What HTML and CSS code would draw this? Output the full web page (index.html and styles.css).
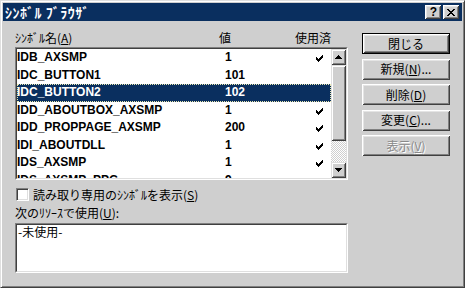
FILE: index.html
```html
<!DOCTYPE html>
<html lang="ja">
<head>
<meta charset="utf-8">
<title>シンボル ブラウザ</title>
<link rel="stylesheet" href="styles.css">
</head>
<body>
<div class="window">
  <div class="titlebar">
    <span class="title">ｼﾝﾎﾞﾙ ﾌﾞﾗｳｻﾞ</span>
    <div class="tbtns">
      <span class="tbtn help">?</span>
      <span class="tbtn close">
        <svg width="8" height="7" viewBox="0 0 8 7" shape-rendering="crispEdges">
          <rect x="0" y="0" width="2" height="1"/><rect x="6" y="0" width="2" height="1"/>
          <rect x="1" y="1" width="2" height="1"/><rect x="5" y="1" width="2" height="1"/>
          <rect x="2" y="2" width="4" height="1"/>
          <rect x="3" y="3" width="2" height="1"/>
          <rect x="2" y="4" width="4" height="1"/>
          <rect x="1" y="5" width="2" height="1"/><rect x="5" y="5" width="2" height="1"/>
          <rect x="0" y="6" width="2" height="1"/><rect x="6" y="6" width="2" height="1"/>
        </svg>
      </span>
    </div>
  </div>
  <div class="content">
    <div class="left">
      <div class="headers">
        <span>ｼﾝﾎﾞﾙ名(<u>A</u>)</span>
        <span>値</span>
        <span>使用済</span>
      </div>
      <div class="listbox">
        <div class="listbox-inner">
          <div class="rows">
            <div class="row"><span class="c-name">IDB_AXSMP</span><span class="c-val">1</span><span class="c-used"><svg class="check" width="7" height="7" viewBox="0 0 7 7" shape-rendering="crispEdges"><rect x="6" y="0" width="1" height="1"/><rect x="5" y="1" width="2" height="1"/><rect x="0" y="2" width="1" height="1"/><rect x="4" y="2" width="3" height="1"/><rect x="0" y="3" width="2" height="1"/><rect x="3" y="3" width="3" height="1"/><rect x="0" y="4" width="5" height="1"/><rect x="1" y="5" width="3" height="1"/><rect x="2" y="6" width="1" height="1"/></svg></span></div>
            <div class="row"><span class="c-name">IDC_BUTTON1</span><span class="c-val">101</span><span class="c-used"></span></div>
            <div class="row selected"><span class="c-name">IDC_BUTTON2</span><span class="c-val">102</span><span class="c-used"></span></div>
            <div class="row"><span class="c-name">IDD_ABOUTBOX_AXSMP</span><span class="c-val">1</span><span class="c-used"><svg class="check" width="7" height="7" viewBox="0 0 7 7" shape-rendering="crispEdges"><rect x="6" y="0" width="1" height="1"/><rect x="5" y="1" width="2" height="1"/><rect x="0" y="2" width="1" height="1"/><rect x="4" y="2" width="3" height="1"/><rect x="0" y="3" width="2" height="1"/><rect x="3" y="3" width="3" height="1"/><rect x="0" y="4" width="5" height="1"/><rect x="1" y="5" width="3" height="1"/><rect x="2" y="6" width="1" height="1"/></svg></span></div>
            <div class="row"><span class="c-name">IDD_PROPPAGE_AXSMP</span><span class="c-val">200</span><span class="c-used"><svg class="check" width="7" height="7" viewBox="0 0 7 7" shape-rendering="crispEdges"><rect x="6" y="0" width="1" height="1"/><rect x="5" y="1" width="2" height="1"/><rect x="0" y="2" width="1" height="1"/><rect x="4" y="2" width="3" height="1"/><rect x="0" y="3" width="2" height="1"/><rect x="3" y="3" width="3" height="1"/><rect x="0" y="4" width="5" height="1"/><rect x="1" y="5" width="3" height="1"/><rect x="2" y="6" width="1" height="1"/></svg></span></div>
            <div class="row"><span class="c-name">IDI_ABOUTDLL</span><span class="c-val">1</span><span class="c-used"><svg class="check" width="7" height="7" viewBox="0 0 7 7" shape-rendering="crispEdges"><rect x="6" y="0" width="1" height="1"/><rect x="5" y="1" width="2" height="1"/><rect x="0" y="2" width="1" height="1"/><rect x="4" y="2" width="3" height="1"/><rect x="0" y="3" width="2" height="1"/><rect x="3" y="3" width="3" height="1"/><rect x="0" y="4" width="5" height="1"/><rect x="1" y="5" width="3" height="1"/><rect x="2" y="6" width="1" height="1"/></svg></span></div>
            <div class="row"><span class="c-name">IDS_AXSMP</span><span class="c-val">1</span><span class="c-used"><svg class="check" width="7" height="7" viewBox="0 0 7 7" shape-rendering="crispEdges"><rect x="6" y="0" width="1" height="1"/><rect x="5" y="1" width="2" height="1"/><rect x="0" y="2" width="1" height="1"/><rect x="4" y="2" width="3" height="1"/><rect x="0" y="3" width="2" height="1"/><rect x="3" y="3" width="3" height="1"/><rect x="0" y="4" width="5" height="1"/><rect x="1" y="5" width="3" height="1"/><rect x="2" y="6" width="1" height="1"/></svg></span></div>
            <div class="row"><span class="c-name">IDS_AXSMP_PPG</span><span class="c-val">9</span><span class="c-used"></span></div>
          </div>
          <div class="vscroll">
            <div class="sb-btn">
              <svg width="7" height="4" viewBox="0 0 7 4" shape-rendering="crispEdges"><rect x="3" y="0" width="1" height="1"/><rect x="2" y="1" width="3" height="1"/><rect x="1" y="2" width="5" height="1"/><rect x="0" y="3" width="7" height="1"/></svg>
            </div>
            <div class="sb-thumb"></div>
            <div class="sb-track"></div>
            <div class="sb-btn">
              <svg width="7" height="4" viewBox="0 0 7 4" shape-rendering="crispEdges"><rect x="0" y="0" width="7" height="1"/><rect x="1" y="1" width="5" height="1"/><rect x="2" y="2" width="3" height="1"/><rect x="3" y="3" width="1" height="1"/></svg>
            </div>
          </div>
        </div>
      </div>
      <div class="chk"><span class="box"></span><span>読み取り専用のｼﾝﾎﾞﾙを表示(<u>S</u>)</span></div>
      <div class="lbl2">次のﾘｿｰｽで使用(<u>U</u>):</div>
      <div class="usage"><div class="usage-inner">-未使用-</div></div>
    </div>
    <div class="buttons">
      <div class="btn default"><span class="btn-face">閉じる</span></div>
      <div class="btn"><span class="btn-face">新規(<u>N</u>)...</span></div>
      <div class="btn"><span class="btn-face">削除(<u>D</u>)</span></div>
      <div class="btn"><span class="btn-face">変更(<u>C</u>)...</span></div>
      <div class="btn disabled"><span class="btn-face">表示(<u>V</u>)</span></div>
    </div>
  </div>
</div>
</body>
</html>
```
FILE: styles.css
```css
* { box-sizing: border-box; }
html, body { margin: 0; padding: 0; }
body {
  width: 465px;
  height: 288px;
  overflow: hidden;
  background: #cfcfcf;
  font-family: "Noto Sans CJK JP", "Liberation Sans", sans-serif;
  font-size: 12px;
  color: #000;
}
u { text-decoration: underline; text-underline-offset: 1px; }

.window {
  width: 465px;
  height: 288px;
  background: #cfcfcf;
  border: 1px solid;
  border-color: #dfdfdf #404040 #404040 #dfdfdf;
  padding: 2px;
  box-shadow: inset 1px 1px #ffffff, inset -1px -1px #808080;
  display: flex;
  flex-direction: column;
}

.titlebar {
  height: 18px;
  flex: none;
  background: #0a2f5f;
  color: #fff;
  display: flex;
  align-items: center;
  justify-content: space-between;
  padding: 0 3px 0 2px;
}
.title {
  font-weight: bold;
  font-size: 14px;
  line-height: 18px;
  letter-spacing: 0.5px;
}
.tbtns { display: flex; gap: 2px; }
.tbtn {
  width: 16px;
  height: 14px;
  background: #cfcfcf;
  color: #000;
  display: flex;
  align-items: center;
  justify-content: center;
  box-shadow: inset 1px 1px #ffffff, inset -1px -1px #404040, inset 2px 2px #e4e4e4, inset -2px -2px #808080;
}
.tbtn.help {
  font-family: "Liberation Sans", sans-serif;
  font-weight: bold;
  font-size: 12px;
  line-height: 14px;
  padding-left: 1px;
}
.tbtn svg { fill: #000; }

.content {
  flex: 1;
  display: flex;
  gap: 14px;
  padding: 9px 0 0 12px;
}
.left {
  width: 333px;
  display: flex;
  flex-direction: column;
}
.headers {
  height: 16px;
  line-height: 16px;
  display: grid;
  grid-template-columns: 204px 76px auto;
}

.listbox {
  margin-top: 1px;
  height: 133px;
  border: 1px solid;
  border-color: #808080 #ffffff #ffffff #808080;
}
.listbox-inner {
  height: 131px;
  border: 1px solid;
  border-color: #404040 #dfdfdf #dfdfdf #404040;
  display: flex;
  background: #fff;
  overflow: hidden;
}
.rows {
  flex: 1;
  overflow: hidden;
}
.row {
  height: 17.5px;
  line-height: 17.5px;
  display: grid;
  grid-template-columns: 208px 88px 1fr;
  font-family: "Liberation Sans", sans-serif;
  font-weight: bold;
  font-size: 12px;
  white-space: nowrap;
}
.row.selected {
  background: #0a2f5f;
  color: #fff;
  outline: 1px dotted #e8e8b0;
  outline-offset: -1px;
}
.c-used {
  padding-left: 3px;
  display: flex;
  align-items: center;
}
.check { fill: #000; margin-top: 2px; }

.vscroll {
  width: 15px;
  display: flex;
  flex-direction: column;
}
.sb-btn, .sb-thumb {
  background: #cfcfcf;
  box-shadow: inset 1px 1px #dfdfdf, inset -1px -1px #404040, inset 2px 2px #ffffff, inset -2px -2px #808080;
}
.sb-btn {
  height: 16px;
  display: flex;
  align-items: center;
  justify-content: center;
}
.sb-btn svg { fill: #000; }
.sb-thumb { height: 76px; }
.sb-track {
  flex: 1;
  background: repeating-conic-gradient(#ffffff 0 25%, #cfcfcf 0 50%) 0 0 / 2px 2px;
}

.chk {
  margin-top: 8px;
  height: 13px;
  line-height: 13px;
  display: flex;
  align-items: center;
  gap: 4px;
  padding-left: 1px;
}
.box {
  width: 13px;
  height: 13px;
  background: #fff;
  border: 1px solid;
  border-color: #808080 #ffffff #ffffff #808080;
  box-shadow: inset 1px 1px #404040, inset -1px -1px #dfdfdf;
}
.lbl2 {
  margin-top: 5px;
  height: 14px;
  line-height: 14px;
}
.usage {
  margin-top: 3px;
  height: 50px;
  border: 1px solid;
  border-color: #808080 #ffffff #ffffff #808080;
}
.usage-inner {
  height: 48px;
  border: 1px solid;
  border-color: #404040 #dfdfdf #dfdfdf #404040;
  background: #fff;
  line-height: 14px;
  padding: 0 1px;
}

.buttons {
  margin-top: 3px;
  width: 88px;
  display: flex;
  flex-direction: column;
  gap: 4.5px;
}
.btn {
  height: 21px;
  display: flex;
}
.btn-face {
  flex: 1;
  display: flex;
  align-items: center;
  justify-content: center;
  line-height: 14px;
  background: #cfcfcf;
  box-shadow: inset 1px 1px #ffffff, inset -1px -1px #404040, inset 2px 2px #e4e4e4, inset -2px -2px #808080;
}
.btn.default { border: 1px solid #000; }
.btn.disabled .btn-face {
  color: #8a8a8a;
  text-shadow: 1px 1px 0 #ffffff;
}
```
